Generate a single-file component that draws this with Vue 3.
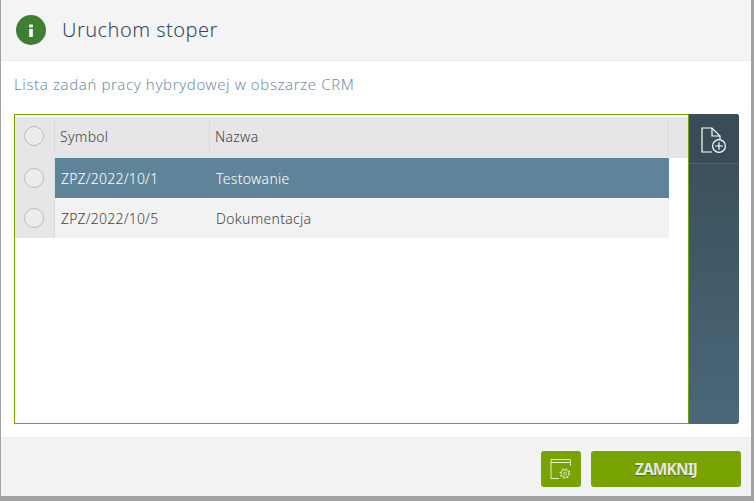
<script setup>
const rows = [
  { symbol: 'ZPZ/2022/10/1', name: 'Testowanie', active: true },
  { symbol: 'ZPZ/2022/10/5', name: 'Dokumentacja', active: false }
]
</script>

<template>
  <div class="overlay">
    <div class="dialog">
      <header class="head">
        <svg class="info" width="30" height="30" viewBox="0 0 30 30">
          <circle cx="15" cy="15" r="15" fill="#3f7f33" />
          <rect x="13.2" y="9.5" width="3.6" height="3" fill="#fff" />
          <rect x="13.2" y="14" width="3.6" height="8" fill="#fff" />
        </svg>
        <h1 class="title">Uruchom stoper</h1>
      </header>

      <div class="body">
        <p class="subtitle">Lista zadań pracy hybrydowej w obszarze CRM</p>
        <div class="panel">
          <div class="grid">
            <div class="grid-head">
              <div class="check-cell"><span class="radio"></span></div>
              <div class="cell col-symbol">Symbol</div>
              <div class="cell col-name">Nazwa</div>
              <div class="scroll-head"></div>
            </div>
            <div v-for="row in rows" :key="row.symbol" class="row" :class="{ active: row.active }">
              <div class="check-cell"><span class="radio"></span></div>
              <div class="row-data">
                <div class="cell col-symbol">{{ row.symbol }}</div>
                <div class="cell col-name">{{ row.name }}</div>
              </div>
            </div>
          </div>
          <aside class="side">
            <button class="side-btn">
              <svg width="28" height="28" viewBox="0 0 28 28" fill="none" stroke="#fff" stroke-width="1.2">
                <path d="M12 27H2V3H12L20 11V14" />
                <path d="M12 3V11H20" />
                <circle cx="19" cy="21" r="6.4" />
                <path d="M19 17.2V24.8M15.2 21H22.8" />
              </svg>
            </button>
          </aside>
        </div>
      </div>

      <footer class="foot">
        <button class="btn btn-icon">
          <svg width="22" height="22" viewBox="0 0 22 22" fill="none" stroke="#e4efcf" stroke-width="1">
            <path d="M9 20.5H1V1.5H20.5V8" />
            <path d="M1 4.5H20.5" />
            <circle cx="15" cy="15.5" r="1.5" stroke-width="0.8" />
            <circle cx="15" cy="15.5" r="3.9" stroke-width="0.8" />
            <circle cx="15" cy="15.5" r="4.8" stroke-width="1.1" stroke-dasharray="1.5 2.27" />
          </svg>
        </button>
        <button class="btn btn-close">ZAMKNIJ</button>
      </footer>
    </div>
  </div>
</template>

<style>
body {
  background: #a3a3a3;
}
</style>

<style scoped>
.overlay {
  width: 754px;
  height: 501px;
  box-sizing: border-box;
  padding: 0 3px 5px 1px;
  background: #a3a3a3;
  font-family: "Noto Sans", "Open Sans", sans-serif;
  font-weight: 300;
  overflow: hidden;
}

.dialog {
  height: 100%;
  display: flex;
  flex-direction: column;
  background: #fff;
}

.head {
  height: 61px;
  flex: none;
  box-sizing: border-box;
  display: flex;
  align-items: center;
  gap: 16px;
  padding-left: 15px;
  background: #f4f4f4;
  border-bottom: 1px solid #ececec;
}

.info {
  flex: none;
}

.title {
  margin: 0 0 2px;
  font-size: 20px;
  font-weight: 300;
  letter-spacing: 0.45px;
  color: #34495f;
}

.body {
  flex: 1;
  display: flex;
  flex-direction: column;
  padding: 0 12px 13px 13px;
  min-height: 0;
}

.subtitle {
  margin: 0;
  height: 53px;
  line-height: 47px;
  font-size: 15px;
  letter-spacing: 0.61px;
  color: #7090ab;
}

.panel {
  flex: 1;
  display: flex;
  min-height: 0;
}

.grid {
  flex: 1;
  box-sizing: border-box;
  border: 1px solid #78a300;
  padding-top: 2px;
  font-size: 14px;
  color: #444;
}

.grid-head {
  display: flex;
  height: 41px;
  box-sizing: border-box;
  padding-bottom: 3px;
  background: #e6e6e6;
}

.row {
  display: flex;
  height: 40px;
  width: 654px;
}

.check-cell {
  width: 40px;
  flex: none;
  box-sizing: border-box;
  padding-right: 1px;
  display: flex;
  align-items: center;
  justify-content: center;
  background: #e6e6e6;
  border-right: 1px solid #dcdcdc;
}

.radio {
  width: 18px;
  height: 18px;
  border: 1px solid #bcbcbc;
  border-radius: 50%;
  background: #ececec;
}

.row-data {
  flex: 1;
  display: flex;
  background: #f2f2f2;
}

.row.active .row-data {
  background: #5f8398;
  color: #fff;
}

.cell {
  display: flex;
  align-items: center;
  box-sizing: border-box;
  letter-spacing: 0.3px;
}

.col-symbol {
  width: 155px;
  padding-left: 6px;
  letter-spacing: 0.2px;
}

.grid-head .col-symbol {
  border-right: 1px solid #dcdcdc;
  padding-left: 5px;
  letter-spacing: 0.3px;
}

.grid-head .col-name {
  padding-left: 5px;
}

.col-name {
  flex: 1;
  padding-left: 6px;
}

.scroll-head {
  width: 19px;
  flex: none;
  border-left: 1px solid #dcdcdc;
}

.side {
  width: 50px;
  flex: none;
  border-radius: 0 3px 3px 0;
  background: linear-gradient(#394c57, #4a6879);
}

.side-btn {
  display: flex;
  align-items: center;
  justify-content: center;
  width: 100%;
  height: 50px;
  padding: 0;
  border: 0;
  border-bottom: 1px solid #4a6472;
  background: #394c57;
  border-radius: 0 3px 0 0;
}

.foot {
  height: 59px;
  flex: none;
  box-sizing: border-box;
  display: flex;
  justify-content: flex-end;
  gap: 10px;
  padding: 13px 10px 0 0;
  background: #f3f3f3;
  border-top: 1px solid #ececec;
}

.btn {
  height: 36px;
  border: 0;
  border-radius: 3px;
  background: #78a300;
  padding: 0;
  display: flex;
  align-items: center;
  justify-content: center;
  font-family: inherit;
}

.btn-icon {
  width: 40px;
}

.btn-close {
  width: 150px;
  font-size: 15.5px;
  font-weight: 700;
  letter-spacing: -0.9px;
  color: #e6e6e6;
  text-shadow: 0 1px 1px #4f6e00;
}
</style>
